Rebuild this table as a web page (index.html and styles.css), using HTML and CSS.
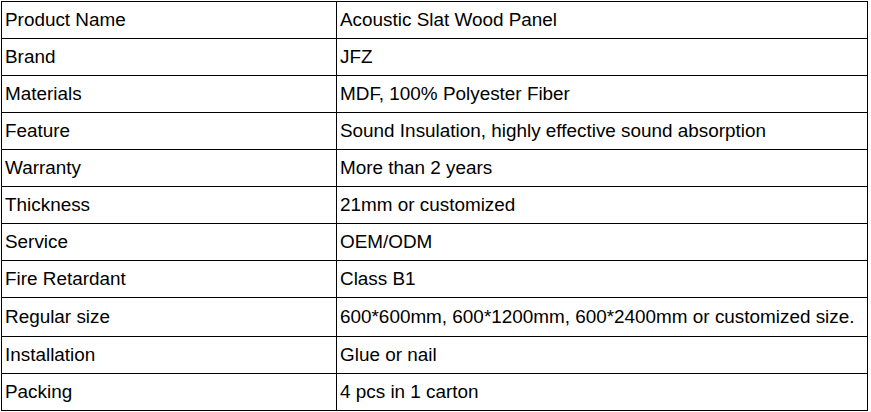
FILE: index.html
```html
<!DOCTYPE html>
<html>
<head>
<meta charset="utf-8">
<link rel="stylesheet" href="styles.css">
</head>
<body>
<table class="spec">
  <colgroup><col class="c1"><col class="c2"></colgroup>
  <tr><td>Product Name</td><td>Acoustic Slat Wood Panel</td></tr>
  <tr><td>Brand</td><td>JFZ</td></tr>
  <tr><td>Materials</td><td>MDF, 100% Polyester Fiber</td></tr>
  <tr><td>Feature</td><td>Sound Insulation, highly effective sound absorption</td></tr>
  <tr><td>Warranty</td><td>More than 2 years</td></tr>
  <tr><td>Thickness</td><td>21mm or customized</td></tr>
  <tr><td>Service</td><td>OEM/ODM</td></tr>
  <tr><td>Fire Retardant</td><td>Class B1</td></tr>
  <tr class="tall"><td>Regular size</td><td>600*600mm, 600*1200mm, 600*2400mm or customized size.</td></tr>
  <tr><td>Installation</td><td>Glue or nail</td></tr>
  <tr><td>Packing</td><td>4 pcs in 1 carton</td></tr>
</table>
</body>
</html>
```
FILE: styles.css
```css
html, body {
  margin: 0;
  padding: 0;
  background: #fff;
}
body {
  padding: 1px 0 0 1px;
}
.spec {
  border-collapse: collapse;
  table-layout: fixed;
  width: 867px;
  font-family: "Liberation Sans", Arial, sans-serif;
  font-size: 18.9px;
  color: #000;
}
.c1 { width: 335px; }
.spec td {
  border: 1px solid #000;
  height: 37px;
  padding: 0 0 0 3px;
  vertical-align: middle;
  white-space: nowrap;
  line-height: 20px;
  box-sizing: border-box;
}
.spec tr.tall td {
  height: 39px;
}
```
